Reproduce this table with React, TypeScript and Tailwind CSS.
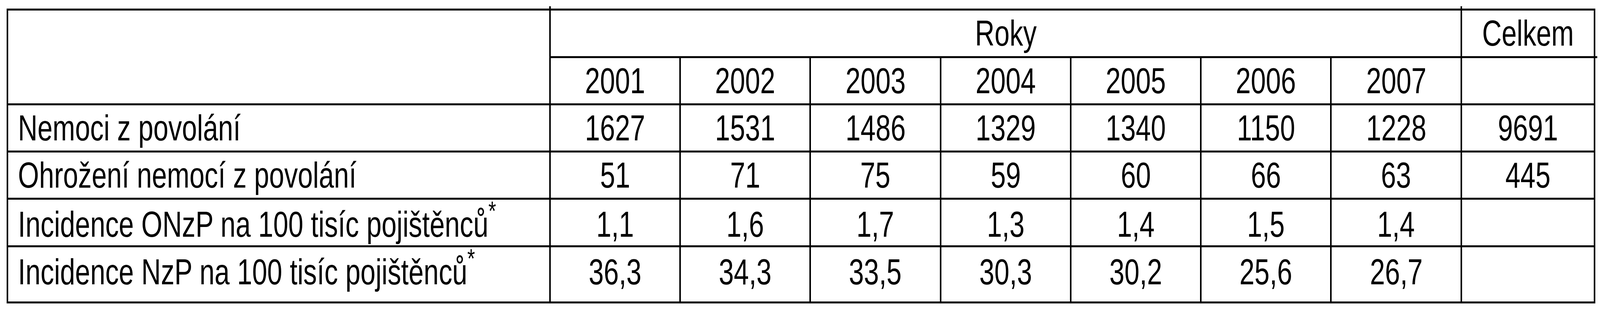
const years = ["2001", "2002", "2003", "2004", "2005", "2006", "2007"];

const rows = [
  {
    label: "Nemoci z povolání",
    values: ["1627", "1531", "1486", "1329", "1340", "1150", "1228"],
    total: "9691",
    star: false,
    cell: "h-[121px] align-middle",
  },
  {
    label: "Ohrožení nemocí z povolání",
    values: ["51", "71", "75", "59", "60", "66", "63"],
    total: "445",
    star: false,
    cell: "h-[121px] align-middle",
  },
  {
    label: "Incidence ONzP na 100 tisíc pojištěnců",
    values: ["1,1", "1,6", "1,7", "1,3", "1,4", "1,5", "1,4"],
    total: "",
    star: true,
    cell: "h-[122px] align-middle pt-[10px]",
  },
  {
    label: "Incidence NzP na 100 tisíc pojištěnců",
    values: ["36,3", "34,3", "33,5", "30,3", "30,2", "25,6", "26,7"],
    total: "",
    star: true,
    cell: "h-[144px] align-top pt-[17px]",
  },
];

const yearWidths = ["w-[333px]", "w-[333px]", "w-[334px]", "w-[333px]", "w-[333px]", "w-[333px]", "w-[334px]"];

const line = "border-x-4 border-y-[5px] border-black";

function Txt({ children, left }: { children: React.ReactNode; left?: boolean }) {
  return (
    <span className={`inline-block scale-x-[0.745] whitespace-nowrap ${left ? "origin-left" : "origin-center"}`}>
      {children}
    </span>
  );
}

export default function App() {
  return (
    <div className="bg-white pl-[17px] pt-[22px] font-['Liberation_Sans',Arial,sans-serif] text-[93px] leading-none text-black">
      <table className="w-[4063px] table-fixed border-collapse">
        <colgroup>
          <col className="w-[1389px]" />
          {yearWidths.map((w, i) => (
            <col key={i} className={w} />
          ))}
          <col className="w-[341px]" />
        </colgroup>
        <thead>
          <tr>
            <th rowSpan={2} className={`${line} font-normal`} />
            <th
              colSpan={7}
              className={`relative h-[122px] ${line} p-0 text-center align-middle font-normal before:absolute before:-top-[11px] before:-left-[4px] before:h-[10px] before:w-[4px] before:bg-black`}
            >
              <Txt>Roky</Txt>
            </th>
            <th
              className={`relative ${line} p-0 text-center align-middle font-normal before:absolute before:-top-[11px] before:-left-[4px] before:h-[10px] before:w-[4px] before:bg-black after:absolute after:-right-[9px] after:-bottom-[5px] after:h-[5px] after:w-[9px] after:bg-black`}
            >
              <Txt>Celkem</Txt>
            </th>
          </tr>
          <tr>
            {years.map((y) => (
              <th key={y} className={`h-[121px] ${line} p-0 text-center align-middle font-normal`}>
                <Txt>{y}</Txt>
              </th>
            ))}
            <th className={`${line} p-0 font-normal`} />
          </tr>
        </thead>
        <tbody>
          {rows.map((r) => (
            <tr key={r.label}>
              <td className={`${line} pl-[25px] text-left ${r.cell}`}>
                <Txt left>
                  {r.label}
                  {r.star && <span className="align-[43px] text-[68px] leading-[0]">*</span>}
                </Txt>
              </td>
              {r.values.map((v, i) => (
                <td key={i} className={`${line} px-0 text-center ${r.cell}`}>
                  <Txt>{v}</Txt>
                </td>
              ))}
              <td className={`${line} px-0 text-center ${r.cell}`}>
                {r.total && <Txt>{r.total}</Txt>}
              </td>
            </tr>
          ))}
        </tbody>
      </table>
    </div>
  );
}
